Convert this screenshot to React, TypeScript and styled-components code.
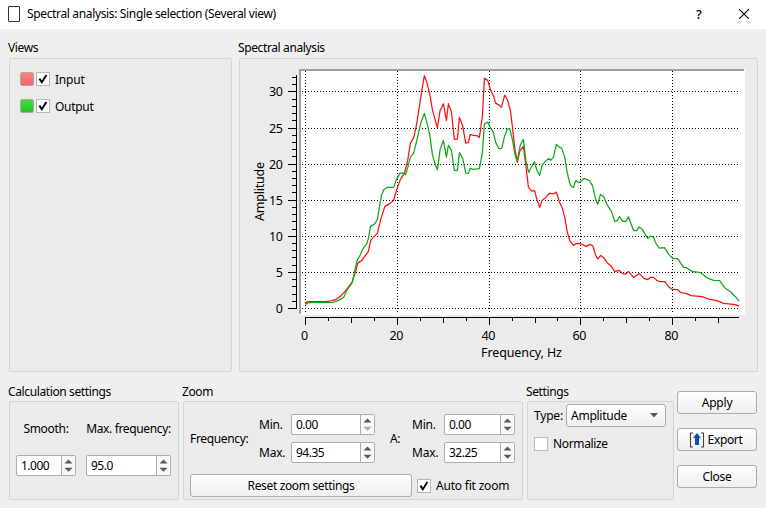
import React from "react";
import styled, { createGlobalStyle } from "styled-components";

const Global = createGlobalStyle`
  * { box-sizing: border-box; }
  body { margin: 0; background: #efefef; overflow: hidden; }
`;

const Dialog = styled.div`
  width: 766px;
  height: 508px;
  display: flex;
  flex-direction: column;
  background: #efefef;
  color: #000;
  font: 12px/16px "Noto Sans", "Open Sans", sans-serif;
`;

const TitleBar = styled.header`
  height: 29px;
  flex: none;
  display: flex;
  align-items: center;
  padding: 0 17px 2px 8px;
  background: #fff;
`;

const Spacer = styled.div`
  flex: 1;
`;

const Text = styled.span<{ $ls?: number }>`
  white-space: pre;
  letter-spacing: ${(p) => p.$ls ?? -0.35}px;
`;

const TitleText = styled(Text)`
  margin-left: 7px;
`;

const HelpMark = styled.span`
  width: 10px;
  margin-right: 35px;
  text-align: center;
  font: 500 13px/16px "Noto Sans", sans-serif;
`;

const TopRow = styled.div`
  display: grid;
  grid-template-columns: 223px 519px;
  gap: 7px;
  padding: 11px 0 0 9px;
  height: 343px;
`;

const BottomRow = styled.div`
  display: grid;
  grid-template-columns: 170px 340px 147px 81px;
  column-gap: 4px;
  padding: 12px 0 0 9px;
  height: 128px;
`;

const Group = styled.section`
  display: flex;
  flex-direction: column;
  min-width: 0;
`;

const GroupTitle = styled.h2<{ $h: number }>`
  margin: 0 0 0 -1px;
  height: ${(p) => p.$h}px;
  flex: none;
  font: inherit;
  white-space: pre;
  letter-spacing: -0.38px;
`;

const Panel = styled.div`
  flex: 1;
  min-height: 0;
  border: 1px solid #d5d5d5;
  border-radius: 2px;
  background: #ebebeb;
`;

const ViewList = styled(Panel)`
  padding: 13px 10px;
  display: flex;
  flex-direction: column;
  gap: 13px;
`;

const ViewItem = styled.div`
  height: 14px;
  display: flex;
  align-items: center;
`;

const ViewName = styled(Text)`
  padding-top: 2px;
`;

const Swatch = styled.span<{ $from: string; $to: string }>`
  width: 14px;
  height: 14px;
  margin-right: 2px;
  border: 1px solid #b0aaaa;
  border-radius: 2px;
  background: linear-gradient(${(p) => p.$from}, ${(p) => p.$to});
`;

const Box = styled.span`
  width: 14px;
  height: 14px;
  flex: none;
  margin-right: 5px;
  border: 1px solid #b9b9b9;
  background: #fff;
  display: flex;
`;

const Calc = styled(Panel)`
  display: grid;
  grid-template-columns: 60px 85px;
  grid-template-rows: 16px 21px;
  column-gap: 10px;
  row-gap: 18px;
  padding: 19px 0 0 6px;
`;

const Center = styled.div`
  text-align: center;
  white-space: nowrap;
`;

const ZoomPanel = styled(Panel)`
  padding: 12px 0 0 6px;
`;

const ZoomGrid = styled.div`
  display: grid;
  grid-template-columns: 69px 32px 99px 22px 32px 71px;
  grid-template-rows: 21px 21px;
  row-gap: 7px;
  align-items: center;
`;

const Spanning = styled.div<{ $col: number }>`
  grid-row: 1 / span 2;
  grid-column: ${(p) => p.$col};
`;

const ZoomFoot = styled.div`
  display: flex;
  align-items: center;
  margin-top: 11px;
`;

const Spin = styled.div<{ $gap?: number }>`
  height: 21px;
  margin-right: ${(p) => p.$gap ?? 0}px;
  display: flex;
  border: 1px solid #aeaeae;
  border-radius: 2px;
  background: #fff;
  overflow: hidden;
`;

const SpinValue = styled.span`
  flex: 1;
  padding-left: 4px;
  line-height: 20px;
  letter-spacing: -0.5px;
`;

const SpinArrows = styled.svg`
  width: 14px;
  height: 19px;
  border-left: 1px solid #aeaeae;
  background: #f8f8f8;
`;

const Button = styled.button<{ $w: number }>`
  width: ${(p) => p.$w}px;
  height: 23px;
  padding: 0;
  display: flex;
  align-items: center;
  justify-content: center;
  border: 1px solid #ababab;
  border-radius: 3px;
  background: linear-gradient(#fefefe, #efefef);
  color: #000;
  font: inherit;
`;

const Settings = styled(Panel)`
  padding: 2px 0 0 6px;
`;

const Line = styled.div<{ $mt?: number; $ml?: number }>`
  display: flex;
  align-items: center;
  margin-top: ${(p) => p.$mt ?? 0}px;
  margin-left: ${(p) => p.$ml ?? 0}px;
`;

const Select = styled.div`
  width: 100px;
  height: 23px;
  margin-left: auto;
  margin-right: 7px;
  padding: 0 7px 0 4px;
  display: flex;
  align-items: center;
  justify-content: space-between;
  border: 1px solid #ababab;
  border-radius: 3px;
  background: linear-gradient(#fefefe, #efefef);
`;

const Actions = styled.div`
  display: flex;
  flex-direction: column;
  gap: 14px;
  padding-top: 7px;
  margin-left: -1px;
`;

const Chart = styled.svg`
  display: block;
  width: 517px;
  height: 312px;
`;

const Check = ({ on }: { on: boolean }) => (
  <Box>
    {on && (
      <svg width="12" height="12" viewBox="0 0 12 12">
        <path d="M2.4 5.6 L4.8 9.2 L9.4 2" fill="none" stroke="#000" strokeWidth="1.9" />
      </svg>
    )}
  </Box>
);

const SpinBox = ({ value, atMin, gap }: { value: string; atMin?: boolean; gap?: number }) => (
  <Spin $gap={gap}>
    <SpinValue>{value}</SpinValue>
    <SpinArrows viewBox="0 0 13 19">
      <path d="M2.5 7.5 L6.5 3.5 L10.5 7.5Z" fill="#5a5a5a" />
      <path d="M2.5 11.8 L6.5 15.8 L10.5 11.8Z" fill={atMin ? "#ababab" : "#5a5a5a"} />
    </SpinArrows>
  </Spin>
);

const RED =
  "305,303 307,301.3 325,301.3 330,300.5 335,299.3 341,295 345,290.5 351.5,282 355,272 357.5,262.5 361,260.5 365,255 368,251 370.5,239.5 374,236 377,233 380.3,219 384.5,206 388,204 393,200.3 396.7,188 400,179 404,173 407.3,160 410,142.7 413.3,137.3 416,125 418.7,108.3 421,92.3 424,75.3 426.3,81.7 429.3,93.3 432,109.3 434.7,119.3 437,127.3 439.7,110 443,103.3 446,120 448,103.3 451,111.7 454,139 457,138.7 459,116.7 462.3,125.7 465.3,142.7 468,142.3 469.7,134.3 473,135 476.7,135.3 479,137 482,115.7 484,78 487.3,80 490.3,90 493,95.3 495.3,102.7 498.7,104.7 501,107 504.3,94.7 507,99.3 510,110 512,126.5 514.7,150 517,162 519.3,151 523,146 525.7,166.7 528,186.7 531.3,190.7 534.3,190.3 536.7,200 539.3,207 541.7,200 545.3,197 548.7,193 553.3,193.3 556,191.7 559,201.7 561.7,207.3 564.3,216.7 566.7,230.7 569.3,240 573,245 575.7,243 580,243.3 586,246 589.3,244 592.3,245.3 595,254 597.3,258.7 600.3,255 603.3,257.3 606.7,262.3 610.7,265.7 614.3,271 619,270 622,273.3 625.3,273.7 628,271 633.3,277 638.7,273 643.3,277.7 647.3,279.3 650,277 653,277 656,279.7 659.3,281.3 664.3,281.3 668.3,286.3 672,289 677.3,289.3 680.7,292.3 686,293.3 690.7,295.3 701.7,296.3 708.3,298.7 716.7,300.3 723.3,303 735,304.3 738.7,305.7";

const GREEN =
  "305,304 308,302.3 332,302 337,300.5 343.3,297 346,290.5 352,282 353.7,273.3 356.7,260 360,254.3 363,247.3 366.3,243.7 368.3,236.7 370,226 374,223.7 377,219.3 379,206.7 381,195 383.3,189.3 386.7,187 393.3,187 395.7,180 399.3,173 403.3,172.7 405,174.3 407.3,167.5 410,156.7 413.3,152.7 416,141.7 418.7,130 421,120.7 424,113 426.7,123.3 429.3,134 432,154.3 434.7,163.7 437,169.3 439.7,149.3 443,140 446,156.7 448,145 451,150 454,170 457,170 459,152.3 462.3,157.7 465.3,172.7 468,173 469.7,168 473,169 479,168.3 482,152.3 484,123.3 487.3,121.7 490.3,127.7 493,132.3 495.3,142 498.7,148.3 501.3,148 504.3,135.3 506.7,129 509.3,128.3 512,139 514.7,155 516.7,160.7 520,144.3 523,139 525.7,161.7 528.3,172 530.7,167 534,161.3 536.7,170.3 539.3,175 541.7,165 544.7,161.3 548.3,158 550.3,160 553,157 556,144 559,146.7 561.3,147.7 564.3,156.7 566.7,171.7 569.7,184.3 573,187.3 575.3,180.3 578.7,182.3 584,178 589.3,180.3 592.3,185.7 595,198.3 597.3,204 600,194 603.3,196.3 606.7,204.3 611,211 614.3,221 617,220.3 619,216 622.3,221 625.3,221 628,216.3 633.3,230.3 636.3,230.3 638.7,226.7 641.3,228.3 644.3,233 647.3,238 650,235.7 653,236.7 655.7,243.3 658.7,247.7 664,247.3 668.3,254 672.7,258.3 677.3,258.3 680.7,263.3 683.3,267 686,267.3 691.7,271 700,272.3 708.3,278.3 713.3,280 719.3,280.3 724.3,287.3 730,291.3 735,296.3 738.7,300.7";

const ampY = (v: number) => Math.round(308 - v * 7.22);
const freqX = (v: number) => Math.round(305 + v * 4.59);
const range = (n: number, step = 1) => Array.from({ length: n }, (_, i) => i * step);

const SpectrumChart = () => (
  <Chart viewBox="240 59 517 312">
    <rect x="299" y="69" width="446" height="246" fill="#fff" />
    <path d="M299 69H744V71H301V314H299Z" fill="#a0a0a0" />
    <g stroke="#000" strokeDasharray="1 2" shapeRendering="crispEdges">
      {range(7, 5).map((v) => (
        <path key={v} d={`M302 ${ampY(v) + 0.5}H740`} />
      ))}
      {range(5, 20).map((v) => (
        <path key={v} d={`M${freqX(v) + 0.5} 71V313`} />
      ))}
    </g>
    <g stroke="#000" shapeRendering="crispEdges">
      <path d="M296.5 75V309" />
      <path d="M305 317.5H739" />
      {range(33).map((v) => (
        <path key={v} d={`M${v % 5 ? 292 : 288} ${ampY(v) + 0.5}H296`} />
      ))}
      {range(19, 5).map((v) => (
        <path key={v} d={`M${freqX(v) + 0.5} 317V${v % 20 === 0 ? 325 : v % 10 === 0 ? 323 : 321}`} />
      ))}
    </g>
    <g fill="none" strokeWidth="1.25" strokeLinejoin="round">
      <polyline points={RED} stroke="#ff1010" transform="translate(.4 .4)" />
      <polyline points={GREEN} stroke="#10a818" transform="translate(.4 .4)" />
    </g>
    <g fontSize="12.5">
      {range(7, 5).map((v) => (
        <text key={v} x="283" y={ampY(v) + 5} textAnchor="end" textLength={v > 5 ? 14 : 7}>
          {v}
        </text>
      ))}
      {range(5, 20).map((v) => (
        <text key={v} x={freqX(v) - 0.5} y="340" textAnchor="middle" textLength={v ? 14 : 7}>
          {v}
        </text>
      ))}
      <text x="481" y="357" textLength="81">
        Frequency, Hz
      </text>
      <text transform="translate(264 221) rotate(-90)" textLength="59">
        Amplitude
      </text>
    </g>
  </Chart>
);

export default function App() {
  return (
    <>
      <Global />
      <Dialog>
        <TitleBar>
          <svg width="12" height="16" viewBox="0 0 12 16">
            <rect x=".5" y=".5" width="11" height="15" rx=".5" fill="#fff" stroke="#333" />
          </svg>
          <TitleText>Spectral analysis: Single selection (Several view)</TitleText>
          <Spacer />
          <HelpMark>?</HelpMark>
          <svg width="10" height="10" viewBox="0 0 10 10">
            <path d="M0 0L10 10M10 0L0 10" stroke="#000" strokeWidth="1.1" />
          </svg>
        </TitleBar>

        <TopRow>
          <Group>
            <GroupTitle $h={18}>Views</GroupTitle>
            <ViewList>
              <ViewItem>
                <Swatch $from="#ff8080" $to="#f86464" />
                <Check on />
                <ViewName $ls={-0.2}>Input</ViewName>
              </ViewItem>
              <ViewItem>
                <Swatch $from="#3ddc3d" $to="#2cc42c" />
                <Check on />
                <ViewName $ls={-0.3}>Output</ViewName>
              </ViewItem>
            </ViewList>
          </Group>
          <Group>
            <GroupTitle $h={18}>Spectral analysis</GroupTitle>
            <Panel>
              <SpectrumChart />
            </Panel>
          </Group>
        </TopRow>

        <BottomRow>
          <Group>
            <GroupTitle $h={17}>Calculation settings</GroupTitle>
            <Calc>
              <Center>
                <Text $ls={-0.3}>Smooth:</Text>
              </Center>
              <Center>
                <Text>Max. frequency:</Text>
              </Center>
              <SpinBox value="1.000" />
              <SpinBox value="95.0" />
            </Calc>
          </Group>
          <Group>
            <GroupTitle $h={17}>Zoom</GroupTitle>
            <ZoomPanel>
              <ZoomGrid>
                <Spanning $col={1}>
                  <Text>Frequency:</Text>
                </Spanning>
                <Text $ls={-0.2}>Min.</Text>
                <SpinBox value="0.00" atMin gap={15} />
                <Spanning $col={4}>
                  <Text>A:</Text>
                </Spanning>
                <Text $ls={-0.2}>Min.</Text>
                <SpinBox value="0.00" />
                <Text $ls={-0.2}>Max.</Text>
                <SpinBox value="94.35" gap={15} />
                <Text $ls={-0.2}>Max.</Text>
                <SpinBox value="32.25" />
              </ZoomGrid>
              <ZoomFoot>
                <Button $w={222}>
                  <Text>Reset zoom settings</Text>
                </Button>
                <Line $ml={5}>
                  <Check on />
                  <Text $ls={-0.2}>Auto fit zoom</Text>
                </Line>
              </ZoomFoot>
            </ZoomPanel>
          </Group>
          <Group>
            <GroupTitle $h={17}>Settings</GroupTitle>
            <Settings>
              <Line>
                <Text $ls={-0.2}>Type:</Text>
                <Select>
                  <Text $ls={-0.25}>Amplitude</Text>
                  <svg width="8" height="5" viewBox="0 0 8 5">
                    <path d="M0 0H8L4 4.5Z" fill="#555" />
                  </svg>
                </Select>
              </Line>
              <Line $mt={9}>
                <Check on={false} />
                <Text>Normalize</Text>
              </Line>
            </Settings>
          </Group>
          <Actions>
            <Button $w={80}>
              <Text $ls={-0.2}>Apply</Text>
            </Button>
            <Button $w={80}>
              <svg width="16" height="16" viewBox="0 0 16 16">
                <path d="M4 1H1.5V15H4M12 1H14.5V15H12" fill="none" stroke="#444" strokeWidth="1.1" />
                <path d="M8 1L12 6H10V13H6V6H4Z" fill="#0a55a5" />
              </svg>
              <Text> Export </Text>
            </Button>
            <Button $w={80}>
              <Text $ls={-0.3}>Close</Text>
            </Button>
          </Actions>
        </BottomRow>
      </Dialog>
    </>
  );
}
